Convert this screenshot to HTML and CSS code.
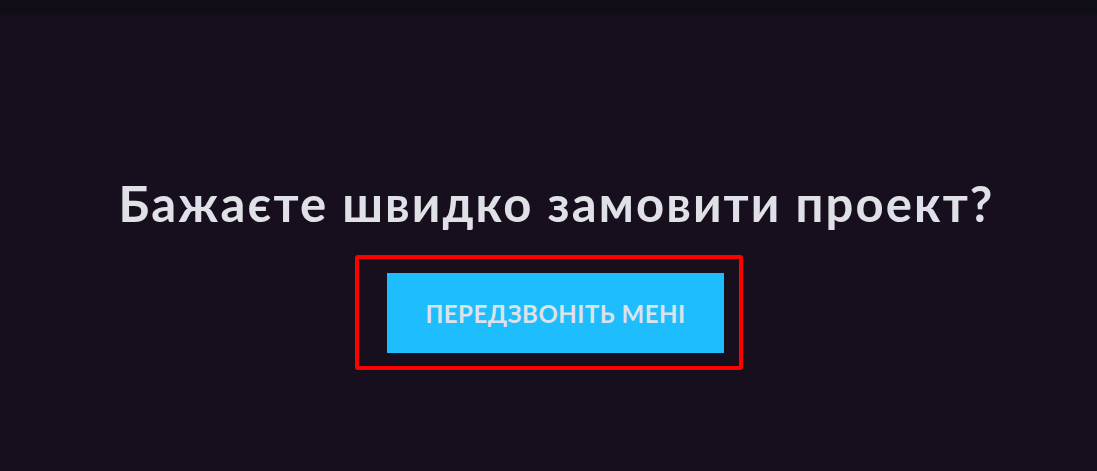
FILE: index.html
```html
<!DOCTYPE html>
<html lang="uk">
<head>
<meta charset="utf-8">
<link rel="stylesheet" href="styles.css">
</head>
<body>
<div class="topbar"></div>
<section class="cta">
  <h2 class="cta-title">Бажаєте швидко замовити проект?</h2>
  <div class="cta-frame">
    <a class="cta-button" href="#">ПЕРЕДЗВОНІТЬ МЕНІ</a>
  </div>
</section>
</body>
</html>
```
FILE: styles.css
```css
html, body {
  margin: 0;
  padding: 0;
  background: #170f1d;
  height: 100%;
  overflow: hidden;
}
body {
  font-family: "Lato", "Open Sans", "Liberation Sans", sans-serif;
}
.topbar {
  height: 15px;
  background: linear-gradient(#0f0d16, #120e18);
}
.cta {
  display: flex;
  flex-direction: column;
  align-items: center;
  padding-left: 16px;
  padding-top: 158px;
}
.cta-title {
  margin: 0;
  font-size: 49px;
  line-height: 60px;
  font-weight: 700;
  color: #dfe1e6;
  letter-spacing: 2.1px;
}
.cta-frame {
  margin-top: 22px;
  margin-right: 15px;
  border: 4px solid #ff0000;
  border-radius: 3px;
  padding: 14px 15px 13px 28px;
}
.cta-button {
  display: flex;
  align-items: center;
  justify-content: center;
  width: 337px;
  height: 80px;
  background: #1ebefe;
  color: #dde2e9;
  font-size: 24px;
  font-weight: 700;
  letter-spacing: 0.5px;
  text-decoration: none;
}
```
